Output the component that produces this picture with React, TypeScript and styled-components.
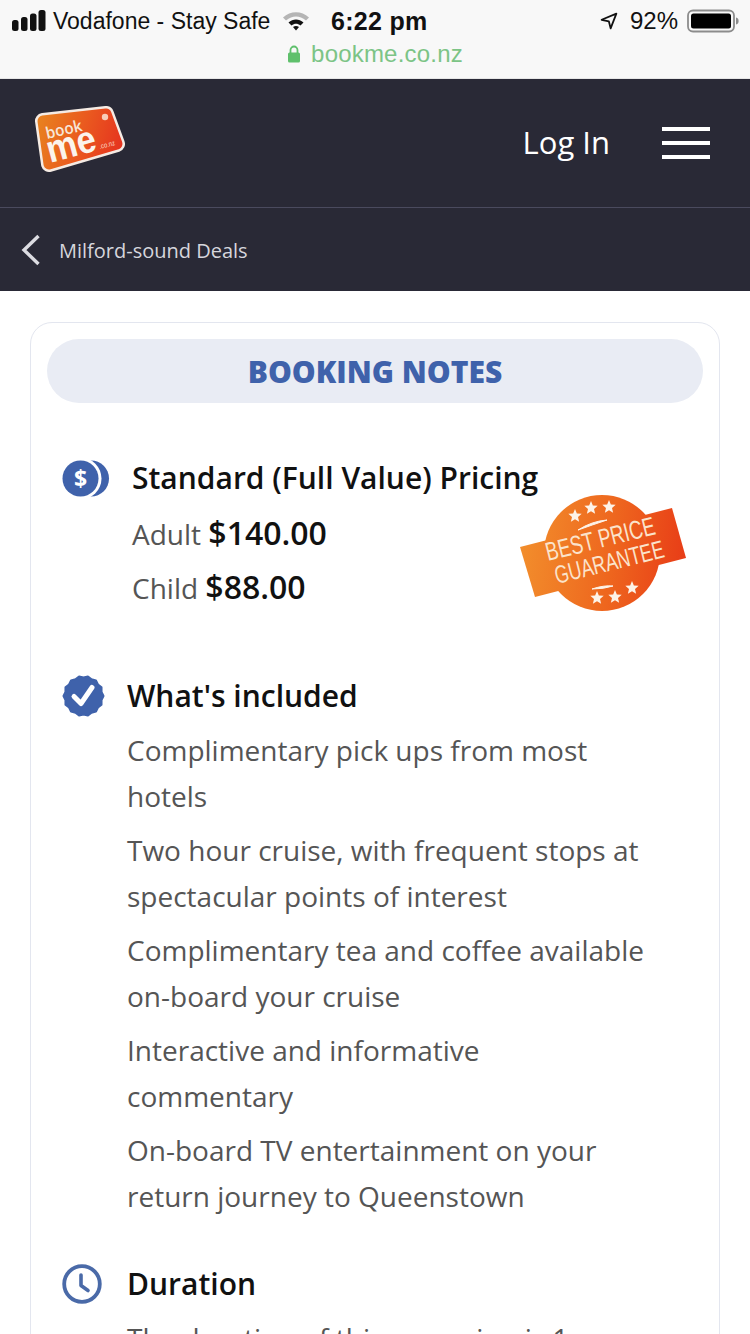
import React from "react";
import styled, { createGlobalStyle } from "styled-components";

const Global = createGlobalStyle`
  html, body { margin: 0; padding: 0; background: #fff; }
  body { width: 750px; height: 1334px; overflow: hidden; font-family: "Open Sans", "Liberation Sans", sans-serif; }
`;

const Page = styled.div`
  width: 750px;
  height: 1334px;
  overflow: hidden;
  background: #fff;
`;

const StatusArea = styled.div`
  height: 79px;
  box-sizing: border-box;
  background: #f8f8f8;
  border-bottom: 1px solid #e6e6e6;
  font-family: "Liberation Sans", Arial, sans-serif;
  display: flex;
  flex-direction: column;
`;

const StatusRow = styled.div`
  height: 42px;
  padding: 0 11px 0 12px;
  display: flex;
  align-items: center;
  font-size: 23px;
  color: #111;
`;

const Carrier = styled.span`
  margin-left: 7px;
  width: 218px;
  white-space: nowrap;
`;

const Clock = styled.span`
  margin-left: 21px;
  font-weight: 700;
  font-size: 25px;
  letter-spacing: 0.3px;
  white-space: nowrap;
`;

const StatusRight = styled.div`
  margin-left: auto;
  display: flex;
  align-items: center;
  gap: 9px;
  font-size: 24px;
`;

const UrlRow = styled.div`
  height: 24px;
  display: flex;
  align-items: center;
  justify-content: center;
  gap: 10px;
  font-size: 24px;
  letter-spacing: 0.2px;
  color: #7cc486;
`;

const Header = styled.header`
  height: 129px;
  box-sizing: border-box;
  background: #292936;
  border-bottom: 1px solid #4a4a5e;
  padding: 0 40px 0 34px;
  display: flex;
  align-items: center;
`;

const LogoMark = styled.svg`
  position: relative;
  top: -3px;
`;

const LogIn = styled.span`
  margin-left: auto;
  color: #fff;
  font-size: 31px;
  font-weight: 500;
  margin-right: 52px;
  position: relative;
  top: -1px;
`;

const Burger = styled.div`
  width: 48px;
  height: 32px;
  display: flex;
  flex-direction: column;
  justify-content: space-between;
`;

const BurgerBar = styled.span`
  height: 4px;
  background: #fff;
`;

const BackBar = styled.nav`
  height: 83px;
  box-sizing: border-box;
  padding-top: 1px;
  background: #292936;
  padding-left: 21px;
  display: flex;
  align-items: center;
  gap: 18px;
  color: #d6d6dd;
  font-size: 20px;
`;

const Card = styled.section`
  margin: 31px 30px 0;
  padding: 16px;
  border: 1px solid #e3e6ef;
  border-radius: 22px;
  background: #fff;
`;

const Pill = styled.h2`
  margin: 0;
  height: 64px;
  border-radius: 32px;
  background: #e9ecf4;
  color: #3f62ab;
  font-size: 30px;
  font-weight: 800;
  display: flex;
  align-items: center;
  justify-content: center;
`;

const Block = styled.div<{ $top: number; $gap: number }>`
  position: relative;
  margin-top: ${(p) => p.$top}px;
  padding-left: 15px;
  display: flex;
  align-items: flex-start;
  gap: ${(p) => p.$gap}px;
`;

const IconSlot = styled.div<{ $w: number }>`
  width: ${(p) => p.$w}px;
  height: 46px;
  flex: none;
  display: flex;
  align-items: center;
`;

const Body = styled.div`
  flex: 1;
`;

const Title = styled.h3`
  margin: 0;
  height: 46px;
  line-height: 46px;
  font-size: 30px;
  font-weight: 600;
  color: #111;
  white-space: nowrap;
`;

const Prices = styled.div`
  margin-top: 5px;
`;

const PriceLine = styled.div`
  height: 54px;
  line-height: 54px;
  font-size: 28px;
  color: #555;
  white-space: nowrap;
`;

const Amount = styled.b`
  font-size: 32px;
  font-weight: 600;
  color: #111;
`;

const List = styled.ul`
  list-style: none;
  margin: 8px 0 0;
  padding: 0;
  display: flex;
  flex-direction: column;
  gap: 8px;
`;

const Item = styled.li`
  font-size: 28px;
  line-height: 46px;
  color: #555;
  width: 522px;
`;

const Para = styled.p`
  margin: 8px 0 0;
  font-size: 28px;
  line-height: 46px;
  color: #555;
  width: 522px;
`;

const Badge = styled.svg`
  position: absolute;
  left: 473px;
  top: 39px;
`;

const Signal = () => (
  <svg width="34" height="22" viewBox="0 0 34 22">
    <rect x="0" y="10" width="6.500" height="11" rx="2.500" fill="#111" />
    <rect x="9" y="7" width="6.500" height="14" rx="2.500" fill="#111" />
    <rect x="18" y="3.500" width="6.500" height="17.500" rx="2.500" fill="#111" />
    <rect x="26.500" y="0" width="7" height="21" rx="2.500" fill="#111" />
  </svg>
);

const WifiMark = styled.svg`
  margin-left: 11px;
`;

const Wifi = () => (
  <WifiMark width="28" height="22" viewBox="0 0 28 22">
    <path d="M1 7.500C8.500 .5 19.500 .5 27 7.500l-3 3C17.500 5 10.500 5 4 10.500z" fill="#b5b5b5" />
    <path d="M6.500 12.500c4.500-4 10.500-4 15 0l-3 3c-3-2.300-6-2.300-9 0z" fill="#111" />
    <path d="M11 17c2-1.400 4-1.400 6 0l-3 3.500z" fill="#111" />
  </WifiMark>
);

const ArrowMark = styled.svg`
  margin-right: 3px;
`;

const Arrow = () => (
  <ArrowMark width="18" height="18" viewBox="0 0 22 22">
    <path d="M2 9.500 20 2l-7 18-2.200-8.600z" fill="none" stroke="#111" strokeWidth="2.200" strokeLinejoin="round" />
  </ArrowMark>
);

const Battery = () => (
  <svg width="52" height="24" viewBox="0 0 52 24">
    <rect x="1" y="1.500" width="46" height="21" rx="5" fill="none" stroke="#8c8c8c" strokeWidth="1.800" />
    <rect x="4" y="4.500" width="40" height="15" rx="2.500" fill="#000" />
    <path d="M49 8.500c2 .6 2.600 1.600 2.600 3.500s-.6 2.900-2.600 3.500z" fill="#8c8c8c" />
  </svg>
);

const Lock = () => (
  <svg width="14" height="18" viewBox="0 0 14 18">
    <path d="M3.500 8V5a3.500 3.500 0 0 1 7 0v3" fill="none" stroke="#5fc06c" strokeWidth="1.800" />
    <rect x="1" y="7.500" width="12" height="10" rx="1.500" fill="#5fc06c" />
  </svg>
);

const CARD = "M9 15 L72 8 L83 38 L15 58 Z";

const Logo = () => (
  <LogoMark width="92" height="68" viewBox="0 0 92 68">
    <defs>
      <linearGradient id="lg" gradientUnits="userSpaceOnUse" x1="4" y1="20" x2="88" y2="45">
        <stop offset="0" stopColor="#e8801f" />
        <stop offset="0.500" stopColor="#ea5a1f" />
        <stop offset="1" stopColor="#e5321f" />
      </linearGradient>
    </defs>
    <path d={CARD} fill="#f5ebe4" stroke="#f5ebe4" strokeWidth="16" strokeLinejoin="round" />
    <path d={CARD} fill="url(#lg)" stroke="url(#lg)" strokeWidth="11" strokeLinejoin="round" />
    <circle cx="71" cy="11" r="3.200" fill="#f8cdb8" />
    <text transform="translate(13 33) rotate(-13)" fontFamily="'Open Sans', sans-serif" fontSize="16" fontWeight="600" fill="#f7e6d8" textLength="37" lengthAdjust="spacingAndGlyphs">book</text>
    <text transform="translate(16 57) rotate(-15)" fontFamily="'Liberation Sans', sans-serif" fontSize="38" fontWeight="700" fill="#fbf4ec" textLength="50" lengthAdjust="spacingAndGlyphs">me</text>
    <text transform="translate(66 43) rotate(-15)" fontFamily="'Liberation Sans', sans-serif" fontSize="7" fill="#fbd9cc" textLength="16" lengthAdjust="spacingAndGlyphs">.co.nz</text>
  </LogoMark>
);

const Chevron = () => (
  <svg width="20" height="32" viewBox="0 0 20 32">
    <path d="M17.500 2 3 16l14.500 14" fill="none" stroke="#dcdce2" strokeWidth="3.400" />
  </svg>
);

const CoinIcon = () => (
  <svg width="48" height="38" viewBox="0 -1 48 38">
    <circle cx="29" cy="18.500" r="18" fill="#3f62ab" />
    <circle cx="18.500" cy="18.500" r="21" fill="#fff" />
    <circle cx="18.500" cy="18.500" r="18" fill="#3f62ab" />
    <text x="18.500" y="27" textAnchor="middle" fontFamily="'Open Sans', sans-serif" fontSize="23" fontWeight="700" fill="#fff">$</text>
  </svg>
);

function sealPath(cx: number, cy: number, r1: number, r2: number, n: number) {
  const pts: string[] = [];
  for (let i = 0; i < n * 2; i++) {
    const a = (Math.PI * i) / n;
    const r = i % 2 === 0 ? r1 : r2;
    pts.push(`${(cx + r * Math.cos(a)).toFixed(2)},${(cy + r * Math.sin(a)).toFixed(2)}`);
  }
  return `M${pts.join("L")}Z`;
}

const SealIcon = () => (
  <svg width="44" height="44" viewBox="0 -1 44 44">
    <path d={sealPath(21.500, 21, 20, 18.500, 14)} fill="#3f62ab" stroke="#3f62ab" strokeLinejoin="round" strokeWidth="2" />
    <path d="M12 21.500l7 7L30 12.500" fill="none" stroke="#fff" strokeWidth="5" strokeLinecap="round" strokeLinejoin="round" />
  </svg>
);

const ClockIcon = () => (
  <svg width="40" height="40" viewBox="0 0 40 40">
    <circle cx="20" cy="20" r="17.800" fill="none" stroke="#4a6aa8" strokeWidth="3.800" />
    <path d="M19 11v10.500l7 5" fill="none" stroke="#4a6aa8" strokeWidth="3.600" strokeLinecap="round" strokeLinejoin="round" />
  </svg>
);

const star = (cx: number, cy: number, r: number) => {
  const pts: string[] = [];
  for (let i = 0; i < 10; i++) {
    const a = -Math.PI / 2 + (Math.PI * i) / 5;
    const rr = i % 2 === 0 ? r : r * 0.45;
    pts.push(`${(cx + rr * Math.cos(a)).toFixed(2)},${(cy + rr * Math.sin(a)).toFixed(2)}`);
  }
  return pts.join(" ");
};

const PriceBadge = () => (
  <Badge width="170" height="122" viewBox="0 0 170 122">
    <defs>
      <linearGradient id="bg" gradientUnits="userSpaceOnUse" x1="0" y1="50" x2="166" y2="70">
        <stop offset="0" stopColor="#f28e2c" />
        <stop offset="0.550" stopColor="#ee661e" />
        <stop offset="1" stopColor="#e83c17" />
      </linearGradient>
    </defs>
    <path d="M0 53 L152 14 L166 64 L15 103 Z" fill="url(#bg)" />
    <circle cx="82" cy="59" r="58" fill="url(#bg)" />
    <polygon points={star(55, 22, 7)} fill="#fdf3e8" />
    <polygon points={star(71, 14, 7)} fill="#fdf3e8" />
    <polygon points={star(89, 13, 7)} fill="#fdf3e8" />
    <polygon points={star(77, 104, 7)} fill="#fdf3e8" />
    <polygon points={star(95, 103, 7)} fill="#fdf3e8" />
    <polygon points={star(112, 94, 7)} fill="#fdf3e8" />
    <path d="M58 36 Q72 27 87 26 Q72 31 58 36Z" fill="#fdf3e8" stroke="#fdf3e8" />
    <path d="M72 95 Q84 95 93 92 Q84 91 72 95Z" fill="#fdf3e8" stroke="#fdf3e8" />
    <g fontFamily="'Liberation Sans', sans-serif" fill="#fbe3cb">
      <text transform="translate(28 67) rotate(-14)" fontSize="26" textLength="112" lengthAdjust="spacingAndGlyphs">BEST PRICE</text>
      <text transform="translate(37 90) rotate(-14)" fontSize="25" textLength="112" lengthAdjust="spacingAndGlyphs">GUARANTEE</text>
    </g>
  </Badge>
);

const included = [
  "Complimentary pick ups from most hotels",
  "Two hour cruise, with frequent stops at spectacular points of interest",
  "Complimentary tea and coffee available on-board your cruise",
  "Interactive and informative commentary",
  "On-board TV entertainment on your return journey to Queenstown",
];

export default function App() {
  return (
    <Page>
      <Global />
      <StatusArea>
        <StatusRow>
          <Signal />
          <Carrier>Vodafone - Stay Safe</Carrier>
          <Wifi />
          <Clock>6:22 pm</Clock>
          <StatusRight>
            <Arrow />
            <span>92%</span>
            <Battery />
          </StatusRight>
        </StatusRow>
        <UrlRow>
          <Lock />
          <span>bookme.co.nz</span>
        </UrlRow>
      </StatusArea>
      <Header>
        <Logo />
        <LogIn>Log In</LogIn>
        <Burger>
          <BurgerBar />
          <BurgerBar />
          <BurgerBar />
        </Burger>
      </Header>
      <BackBar>
        <Chevron />
        <span>Milford-sound Deals</span>
      </BackBar>
      <Card>
        <Pill>BOOKING NOTES</Pill>
        <Block $top={52} $gap={22}>
          <IconSlot $w={48}>
            <CoinIcon />
          </IconSlot>
          <Body>
            <Title>Standard (Full Value) Pricing</Title>
            <Prices>
              <PriceLine>
                Adult <Amount>$140.00</Amount>
              </PriceLine>
              <PriceLine>
                Child <Amount>$88.00</Amount>
              </PriceLine>
            </Prices>
          </Body>
          <PriceBadge />
        </Block>
        <Block $top={59} $gap={21}>
          <IconSlot $w={44}>
            <SealIcon />
          </IconSlot>
          <Body>
            <Title>What's included</Title>
            <List>
              {included.map((t) => (
                <Item key={t}>{t}</Item>
              ))}
            </List>
          </Body>
        </Block>
        <Block $top={42} $gap={25}>
          <IconSlot $w={40}>
            <ClockIcon />
          </IconSlot>
          <Body>
            <Title>Duration</Title>
            <Para>The duration of this excursion is 1</Para>
          </Body>
        </Block>
      </Card>
    </Page>
  );
}
